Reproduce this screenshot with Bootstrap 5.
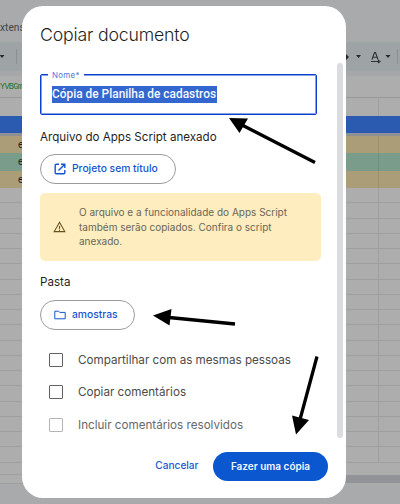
<!DOCTYPE html>
<html lang="pt-BR">
<head>
<meta charset="utf-8">
<meta name="viewport" content="width=device-width, initial-scale=1">
<title>Copiar documento</title>
<link href="https://cdn.jsdelivr.net/npm/bootstrap@5.3.0/dist/css/bootstrap.min.css" rel="stylesheet">
<style>
  body { width: 400px; height: 504px; overflow: hidden; background: #a9aaac; font-family: Inter, Roboto, sans-serif; color: #1f1f1f; }
  .sheet { height: 504px; font-size: 10px; }
  .menu-row { height: 42px; padding-top: 20px; line-height: 15px; color: #444648; font-family: Roboto, sans-serif; font-size: 10.2px; }
  .tool-row { height: 29px; background: #9ea3a6; }
  .tool-row svg { display: block; }
  .formula-row { height: 27px; padding-top: 2px; border-bottom: 1px solid #999; background: #adadad; border-top: 5px solid #a6a7a8; font-family: "Liberation Mono", monospace; color: #27752c; line-height: 18px; font-size: 8.6px; letter-spacing: -.75px; white-space: nowrap; }
  .cells { background: #adadad; }
  .cells > div { display: grid; grid-template-columns: 379px 1fr; }
  .cells > div > span { border-right: 1px solid rgba(0,0,0,.08); padding-left: 18px; font: 10px/17px Roboto, sans-serif; }
  .row-head { height: 18px; }
  .row-blue { height: 17px; background: #2b5bb0; }
  .row-freeze { height: 3px; background: #8f9194; }
  .row-tan { height: 17px; background: #aa9d78; }
  .row-green { height: 18px; background: #7a9c8b; }
  .row-empty { height: 15.25px; border-bottom: 1px solid #9f9f9f; }
  .sheet-foot { height: 42px; background: #a9aaac; }
  .foot-left { width: 200px; height: 21px; background: #adadad; border-bottom: 1px solid #9f9f9f; }
  .foot-left::before { content: ""; display: block; height: 12px; border-bottom: 1px solid #9f9f9f; }
  .foot-right { height: 20px; border-top: 12px solid #adadad; background: #929398; }
  .dialog-box { left: 22px; top: 6px; width: 324px; height: 492px; border-radius: 21px; background: #fff; padding: 0 0 0 18px; }
  .dialog-title { padding-top: 16px; height: 57px; margin: 0; font: 300 17.7px/26px Inter, sans-serif; letter-spacing: -.18px; }
  .scroll-area { height: 375px; width: 299px; }
  .thumb { width: 6px; height: 375px; border-radius: 3px; background: #dadce0; margin-right: 3px; }
  .name-field { width: 277px; height: 41px; margin: 11px 0 0; padding: 11px 0 0 11px; border: 1px solid #0b41cc; box-shadow: inset 0 0 0 1px rgba(11,65,204,.5); border-radius: 2px; }
  .name-label { left: 7px; top: -6px; padding: 0 4px; background: #fff; color: #4a76d9; font-size: 7.9px; line-height: 13px; letter-spacing: .3px; white-space: nowrap; }
  .name-value { background: #3367cf; color: #f4f8ff; font: 500 11.9px/17px Roboto, sans-serif; white-space: nowrap; width: 165px; height: 17px; }
  .section-label { font-size: 11.6px; line-height: 16px; white-space: nowrap; }
  .pill { height: 30px; border: 1px solid #999b9d; border-radius: 15px; color: #1554d1; font-size: 10.3px; font-weight: 500; padding-left: 13px; white-space: nowrap; }
  .pill svg { flex: none; }
  .pill-project { width: 136px; }
  .pill-folder { width: 95px; }
  .notice { width: 281px; height: 68px; background: #fdedbf; border-radius: 5px; color: #6b6659; font-size: 10px; line-height: 14.6px; padding-left: 13px; }
  .option { height: 32.3px; font-size: 11.65px; color: #4b4b4b; white-space: nowrap; }
  .option .fit { padding-top: 1px; }
  .tick { width: 14px; height: 14px; border: 1.4px solid #606264; border-radius: 1px; margin: 0 15px 0 9px; }
  .option-off { color: #68696a; }
  .option-off .tick { border-color: #b5b6b7; }
  .dialog-actions { height: 30px; margin-top: 13px; padding-right: 18px; }
  .act-cancel { color: #2059d5; font-size: 10.1px; font-weight: 500; margin-right: 14.500px; }
  .act-copy { width: 115px; height: 29px; border-radius: 15px; background: #0b57d0; color: #f1f5ff; font: 600 10px/29px Inter, sans-serif; }
  .fit { display: inline-block; white-space: nowrap; }
</style>
</head>
<body class="position-relative">
<div class="sheet">
  <div class="menu-row">xtens</div>
  <div class="tool-row">
    <svg width="400" height="29" viewBox="0 42 400 29">
      <path d="M-.5 55h5l-2.500 3zM356 55h5l-2.500 3zM385.500 55h5l-2.500 3zM346 54l3 3-3 3z" fill="#25282a"/>
      <path d="M16.500 49v15M397.500 49v15" stroke="#8b9094"/>
      <path d="M372 59.500l2.500-7h1l2.500 7M373 57.300h4M371 61.500h8M378 60l2 1.500-2 1.500" fill="none" stroke="#2e3133" stroke-width="1.100"/>
    </svg>
  </div>
  <div class="formula-row">YVBGm</div>
  <div class="cells">
    <div class="row-head"><span></span></div>
    <div class="row-blue"></div>
    <div class="row-freeze"></div>
    <div class="row-tan"><span>e</span></div>
    <div class="row-green"><span>e</span></div>
    <div class="row-tan"><span>e</span></div>
    <div class="row-empty"><span></span></div><div class="row-empty"><span></span></div><div class="row-empty"><span></span></div>
    <div class="row-empty"><span></span></div><div class="row-empty"><span></span></div><div class="row-empty"><span></span></div>
    <div class="row-empty"><span></span></div><div class="row-empty"><span></span></div><div class="row-empty"><span></span></div>
    <div class="row-empty"><span></span></div><div class="row-empty"><span></span></div><div class="row-empty"><span></span></div>
    <div class="row-empty"><span></span></div><div class="row-empty"><span></span></div><div class="row-empty"><span></span></div>
    <div class="row-empty"><span></span></div><div class="row-empty"><span></span></div><div class="row-empty"><span></span></div>
  </div>
  <div class="sheet-foot d-flex align-items-start">
    <div class="foot-left"></div>
    <div class="foot-right flex-grow-1"></div>
  </div>
</div>

<main class="dialog-box position-absolute d-flex flex-column">
  <h1 class="dialog-title"><span class="fit">Copiar documento</span></h1>
  <div class="d-flex justify-content-between">
    <div class="scroll-area">
      <div class="name-field position-relative">
        <div class="name-label position-absolute">Nome*</div>
        <div class="name-value"><span class="fit">Cópia de Planilha de cadastros</span></div>
      </div>
      <div class="section-label" style="margin-top:14px"><span class="fit">Arquivo do Apps Script anexado</span></div>
      <div class="pill pill-project d-flex align-items-center" style="margin-top:9px">
        <svg width="12" height="12" viewBox="0 0 12 12" fill="none" stroke="currentColor" stroke-width="1.400"><path d="M5 1.200H2.200q-1 0-1 1v7.600q0 1 1 1h7.600q1 0 1-1V7M7 1.200h3.800V5M10.800 1.200L4.500 7.500"/></svg>
        <span class="fit" style="margin-left:6px">Projeto sem título</span>
      </div>
      <div class="notice d-flex align-items-center" style="margin-top:9px">
        <svg width="13" height="12" viewBox="0 0 13 12" fill="none" stroke="#65521f" stroke-width="1.100"><path d="M6.500 1.300l5.300 9.300H1.200zM6.500 4.800v3M6.500 8.500v1.200"/></svg>
        <div style="margin-left:13px"><span class="fit">O arquivo e a funcionalidade do Apps Script</span><br><span class="fit">também serão copiados. Confira o script</span><br><span class="fit">anexado.</span></div>
      </div>
      <div class="section-label" style="margin-top:13px"><span class="fit">Pasta</span></div>
      <div class="pill pill-folder d-flex align-items-center" style="margin-top:10px">
        <svg width="12" height="10" viewBox="0 0 12 10" fill="none" stroke="currentColor"><path d="M.8 8.800V1.200h3.700l1.200 1.200h5.500v6.400z"/></svg>
        <span class="fit" style="margin-left:6px">amostras</span>
      </div>
      <div style="margin-top:14px">
        <div class="option d-flex align-items-center"><span class="tick"></span><span class="fit">Compartilhar com as mesmas pessoas</span></div>
        <div class="option d-flex align-items-center"><span class="tick"></span><span class="fit">Copiar comentários</span></div>
        <div class="option option-off d-flex align-items-center"><span class="tick"></span><span class="fit">Incluir comentários resolvidos</span></div>
      </div>
    </div>
    <div class="thumb"></div>
  </div>
  <div class="dialog-actions d-flex align-items-center justify-content-end">
    <span class="act-cancel"><span class="fit">Cancelar</span></span>
    <span class="act-copy text-center"><span class="fit">Fazer uma cópia</span></span>
  </div>
</main>

<svg class="position-absolute top-0 start-0 pe-none" width="400" height="504" viewBox="0 0 400 504">
  <g stroke="#000" stroke-width="3.300"><path d="M315 162.500L242 125M235 324l-66-6.500M317 356.500l-17 63"/></g>
  <path d="M229 118l19 .5-8.500 14.500zM153 315.500l18.500-6.500-2 16.500zM296 434.500l-4-19 17 4.500z"/>
</svg>
<script src="https://cdn.jsdelivr.net/npm/bootstrap@5.3.0/dist/js/bootstrap.bundle.min.js"></script>
</body>
</html>
